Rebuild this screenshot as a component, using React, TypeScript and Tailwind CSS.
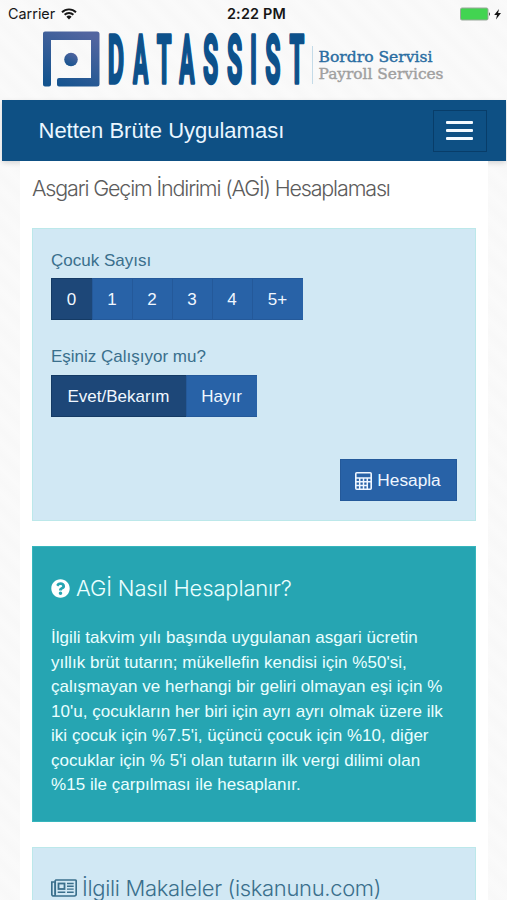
import { clsx } from "clsx";
import type { ReactNode } from "react";
import { FaQuestionCircle } from "react-icons/fa";

const SANS = "font-['Liberation_Sans',Arial,sans-serif]";
const LIGHT = "font-['Inter','Liberation_Sans',sans-serif] font-light";

const LOGO_LETTERS = [
    { char: "D", x: 107.8, sx: 0.38 },
    { char: "A", x: 133, sx: 0.345 },
    { char: "T", x: 156.7, sx: 0.36 },
    { char: "A", x: 179.2, sx: 0.345 },
    { char: "S", x: 203, sx: 0.375 },
    { char: "S", x: 227, sx: 0.375 },
    { char: "I", x: 250, sx: 0.36 },
    { char: "S", x: 265.3, sx: 0.375 },
    { char: "T", x: 289.5, sx: 0.36 },
];

const CHILD_COUNTS = [
    { label: "0", width: "w-[41px]" },
    { label: "1", width: "w-10" },
    { label: "2", width: "w-10" },
    { label: "3", width: "w-10" },
    { label: "4", width: "w-10" },
    { label: "5+", width: "w-[51px]" },
];

const SPOUSE_OPTIONS = [
    { label: "Evet/Bekarım", width: "w-[135px]" },
    { label: "Hayır", width: "w-[71px]" },
];

const AGI_LINES = [
    "İlgili takvim yılı başında uygulanan asgari ücretin",
    "yıllık brüt tutarın; mükellefin kendisi için %50'si,",
    "çalışmayan ve herhangi bir geliri olmayan eşi için %",
    "10'u, çocukların her biri için ayrı ayrı olmak üzere ilk",
    "iki çocuk için %7.5'i, üçüncü çocuk için %10, diğer",
    "çocuklar için % 5'i olan tutarın ilk vergi dilimi olan",
    "%15 ile çarpılması ile hesaplanır.",
];

const StatusBar = () => (
    <div className="grid h-7 grid-cols-3 items-center pl-2 pr-[5px] text-[14.400px] text-[#161616] font-['Inter',sans-serif]">
        <div className="flex items-center gap-[6px]">
            <span>Carrier</span>
            <svg width="16" height="12" viewBox="0 0 16 12" aria-label="Wi-Fi">
                <g fill="none" stroke="#161616" strokeWidth="1.9">
                    <path d="M1 4.2a10 10 0 0 1 14 0" />
                    <path d="M3.6 6.8a6.3 6.3 0 0 1 8.8 0" />
                </g>
                <path d="M5.4 8.7a3.8 3.8 0 0 1 5.2 0L8 11.4z" fill="#161616" />
            </svg>
        </div>
        <span className="pl-[3px] text-center font-semibold tracking-[0.2px]">2:22 PM</span>
        <div className="flex items-center justify-end">
            <svg width="42" height="14" viewBox="0 0 42 14" aria-label="Charging">
                <rect x="0.5" y="1" width="27.5" height="12" rx="1.5" fill="#42d451" stroke="#9aa79b" />
                <path d="M29 5.2c1.200.3 1.200 3.300 0 3.600z" fill="#333" />
                <path d="M39 2 34.200 8h2.800l-1 4.500 5-6.500h-2.900z" fill="#161616" />
            </svg>
        </div>
    </div>
);

const Logo = () => (
    <svg width="507" height="72" viewBox="0 28 507 72" className="block overflow-visible" aria-label="Datassist">
        <defs>
            <linearGradient id="mark" x1="0.7" y1="0" x2="0.2" y2="1">
                <stop offset="0" stopColor="#5265a0" />
                <stop offset="1" stopColor="#13538e" />
            </linearGradient>
        </defs>
        <path
            d="M45 31.500H97a2.500 2.500 0 0 1 2.500 2.500V84a2.500 2.500 0 0 1-2.500 2.500H59a2 2 0 0 1-2-2V80a2 2 0 0 1 2-2H91V40H51V84.500a2 2 0 0 1-2 2H45a2 2 0 0 1-2-2V33.500a2 2 0 0 1 2-2z"
            fill="url(#mark)"
        />
        <circle cx="71" cy="59.500" r="6.800" fill="url(#mark)" />
        {LOGO_LETTERS.map(({ char, x, sx }) => (
            <text
                key={x}
                transform={`translate(${x} 82.500) scale(${sx} 1)`}
                fontSize="66"
                fill="#0d518b"
                stroke="#0d518b"
                strokeWidth="2.500"
                strokeLinejoin="round"
                vectorEffect="non-scaling-stroke"
                className="font-['Roboto',sans-serif] font-bold"
            >
                {char}
            </text>
        ))}
        <path d="M312.500 46V84" stroke="#c4dbe8" />
        <g className="font-['DejaVu_Serif',serif]" fontSize="15" strokeWidth="0.400">
            <text x="318.500" y="62" textLength="114" lengthAdjust="spacingAndGlyphs" fill="#2a6da2" stroke="#2a6da2">
                Bordro Servisi
            </text>
            <text x="318.500" y="79" textLength="125" lengthAdjust="spacingAndGlyphs" fill="#a0a0a0" stroke="#a0a0a0">
                Payroll Services
            </text>
        </g>
    </svg>
);

const NavBar = () => (
    <nav className="mx-auto flex h-[61px] w-[504px] items-center justify-between bg-[#0e5084] pl-[37px] pr-[19px] shadow-[0_2px_5px_rgba(0,0,0,0.14)]">
        <span className="text-[22px] leading-none text-[#eaf6ff]">Netten Brüte Uygulaması</span>
        <button
            type="button"
            aria-label="Menü"
            className="flex h-[42px] w-[54px] flex-col items-center justify-center gap-[5px] border border-[#083d69]"
        >
            <span className="h-[3px] w-[27px] rounded-[1px] bg-[#f4faff]" />
            <span className="h-[3px] w-[27px] rounded-[1px] bg-[#f4faff]" />
            <span className="h-[3px] w-[27px] rounded-[1px] bg-[#f4faff]" />
        </button>
    </nav>
);

type ButtonGroupProps = {
    options: { label: string; width: string }[];
};

const ButtonGroup = ({ options }: ButtonGroupProps) => (
    <div className="flex h-[42px] w-fit">
        {options.map(({ label, width }, index) => (
            <button
                key={label}
                type="button"
                className={clsx(
                    "border-y border-l pt-px pr-px text-[17px] text-[#f0f7ff]",
                    width,
                    index === 0
                        ? "border-[#143a64] bg-[#1d4778]"
                        : "border-[#24599a] bg-[#2862a7]",
                )}
            >
                {label}
            </button>
        ))}
    </div>
);

const CalculatorIcon = () => (
    <svg width="17" height="18" viewBox="0 0 17 18" aria-hidden="true">
        <rect x="0.800" y="0.800" width="15.400" height="16.400" rx="1" fill="none" stroke="#eef6ff" strokeWidth="1.600" />
        <path
            d="M1 6H16M1 9.700H16M1 13.400H12M4.700 6V17M8.500 6V17M12.300 6V17"
            stroke="#eef6ff"
            strokeWidth="1.500"
        />
    </svg>
);

const NewspaperIcon = () => (
    <svg width="26" height="18" viewBox="0 0 26 18" fill="none" stroke="currentColor" aria-hidden="true">
        <path
            d="M4.200 1H24.200a1 1 0 0 1 1 1V15.200a1.800 1.800 0 0 1-1.800 1.800H2.800A1.900 1.900 0 0 1 .8 15.200V3H4.200V15.200a1.700 1.700 0 0 1-1.700 1.700"
            strokeWidth="1.700"
        />
        <path d="M4.200 1V15" strokeWidth="1.500" />
        <rect x="7.500" y="4.500" width="6" height="5.500" strokeWidth="1.800" />
        <path d="M16 4.500H22.700M16 7.300H22.700M16 10.100H22.700M6.700 13.300H14.300M16 13.300H22.700" strokeWidth="1.400" />
    </svg>
);

const Panel = ({ className, children }: { className: string; children: ReactNode }) => (
    <section className={clsx("w-[444px] border px-[18px]", className)}>{children}</section>
);

const App = () => (
    <div
        className={clsx(
            "h-[900px] w-[507px] overflow-hidden bg-[#f8f8f8] bg-[repeating-linear-gradient(45deg,#fafafa_0px,#f8f8f8_9px,#fafafa_18px)]",
            SANS,
        )}
    >
        <StatusBar />
        <Logo />
        <NavBar />
        <main className="ml-5 w-[468px] bg-white pl-3">
            <h1
                className={clsx(
                    "flex h-[67px] items-start pt-[14px] text-[21.500px] leading-[26px] tracking-[-1.160px] whitespace-nowrap text-[#5c5c5c]",
                    LIGHT,
                )}
            >
                Asgari Geçim İndirimi (AGİ) Hesaplaması
            </h1>

            <Panel className="h-[293px] border-[#bce8ea] bg-[#d1e8f4] pt-[19px]">
                <p className="h-[30px] pt-px text-[17px] leading-6 text-[#3a6f8c]">Çocuk Sayısı</p>
                <ButtonGroup options={CHILD_COUNTS} />
                <p className="mt-[25px] h-[30px] text-[17px] leading-6 text-[#3a6f8c]">Eşiniz Çalışıyor mu?</p>
                <ButtonGroup options={SPOUSE_OPTIONS} />
                <button
                    type="button"
                    className="mt-[42px] ml-auto flex h-[42px] w-[117px] items-center justify-center gap-[5px] border border-[#24599a] bg-[#2862a7] pt-px pr-px text-[17.300px] text-[#eef6ff]"
                >
                    <CalculatorIcon />
                    Hesapla
                </button>
            </Panel>

            <Panel className="mt-[25px] h-[276px] border-[#36b5bc] bg-[#26a5b2] pt-[26px] text-[#eaffff]">
                <h2 className={clsx("flex h-[30px] items-center gap-[6px] text-[22px] tracking-[-0.160px] whitespace-nowrap", LIGHT)}>
                    <FaQuestionCircle className="size-[19px] text-white" aria-hidden="true" />
                    AGİ Nasıl Hesaplanır?
                </h2>
                <div className="mt-[23px] text-[17px] leading-[24.500px] tracking-[0.040px] whitespace-nowrap">
                    {AGI_LINES.map((line) => (
                        <p key={line}>{line}</p>
                    ))}
                </div>
            </Panel>

            <Panel className="mt-[25px] h-[100px] border-[#bce8ea] bg-[#d1e8f4] pt-[25px] text-[#3a6f8c]">
                <h2 className={clsx("flex h-[30px] items-center gap-[5px] text-[22px] tracking-[-0.330px] whitespace-nowrap", LIGHT)}>
                    <NewspaperIcon />
                    İlgili Makaleler (iskanunu.com)
                </h2>
            </Panel>
        </main>
    </div>
);

export default App;
